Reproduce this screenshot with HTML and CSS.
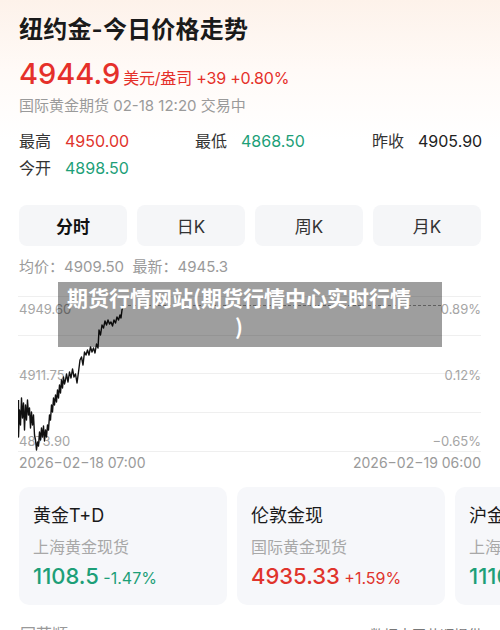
FILE: index.html
```html
<!DOCTYPE html>
<html lang="zh-CN">
<head>
<meta charset="utf-8">
<title>纽约金-今日价格走势</title>
<link rel="stylesheet" href="styles.css">
</head>
<body>
<div class="page">
  <div class="wrap">
    <h1 class="title">纽约金-今日价格走势</h1>
    <div class="price-row">
      <span class="price">4944.9</span>
      <span class="unit">美元/盎司 +39 +0.80%</span>
    </div>
    <div class="sub">国际黄金期货 02-18 12:20 交易中</div>
    <div class="stats">
      <div class="stat"><span class="lbl">最高</span><span class="val red">4950.00</span></div>
      <div class="stat"><span class="lbl">最低</span><span class="val green">4868.50</span></div>
      <div class="stat"><span class="lbl">昨收</span><span class="val">4905.90</span></div>
      <div class="stat"><span class="lbl">今开</span><span class="val green">4898.50</span></div>
    </div>
    <div class="tabs">
      <div class="tab active">分时</div>
      <div class="tab">日K</div>
      <div class="tab">周K</div>
      <div class="tab">月K</div>
    </div>
    <div class="avg">均价：4909.50&nbsp;&nbsp;最新：4945.3</div>
    <svg class="chart" width="464" height="163" viewBox="18 290 464 163">
      <g stroke="#efefef" stroke-width="1">
        <line x1="18" y1="296.5" x2="481" y2="296.5"/>
        <line x1="18" y1="335.5" x2="481" y2="335.5"/>
        <line x1="18" y1="373.5" x2="481" y2="373.5"/>
        <line x1="18" y1="412.5" x2="481" y2="412.5"/>
        <line x1="18" y1="451.5" x2="481" y2="451.5"/>
      </g>
      <line x1="123" y1="305.5" x2="441" y2="305.5" stroke="#9a9a9a" stroke-width="1" stroke-dasharray="3 2"/>
      <g class="axis">
        <text x="19" y="314">4949.60</text>
        <text x="19" y="380">4911.75</text>
        <text x="19" y="446">4873.90</text>
        <text x="481" y="314" text-anchor="end">0.89%</text>
        <text x="481" y="380" text-anchor="end">0.12%</text>
        <text x="481" y="446" text-anchor="end">−0.65%</text>
      </g>
      <polyline fill="none" stroke="#111" stroke-width="1.4" stroke-linejoin="round" points="18.5,400 18.5,437 19.5,410 20.5,425 21.5,398 22.5,418 23.5,403 24.5,430 25.5,405 26.5,420 27.5,400 28.5,415 29.5,408 30.5,428 31.5,412 32.5,425 33.5,415 34.5,435 35.5,440 36.5,450 37.5,442 38.5,446 39.5,432 40.5,440 41.5,428 42.5,437 43.5,426 44.5,441 45.5,430 46.5,437 47.5,425 48.5,430 49.5,415 50.5,420 51.5,405 52.5,412 53.5,398 54.5,405 55.5,395 56.5,402 57.5,390 58.5,398 59.5,385 60.5,393 61.5,380 62.5,388 63.5,377 64.5,384 65.5,380 66.5,374 68,382 69.5,372 71,378 72.5,369 74,377 75.5,374 77,383 78.5,372 80,360 81.5,357 83,365 84.5,352 86,355 87.5,350 89,355 90.5,347 92,352 93.5,348 95,353 96.5,344 98,348 99,330 100.5,335 102,325 103.5,328 105,321 106.5,325 108,320 109.5,324 111,322 112.5,326 114,320 115.5,323 117,317 118.5,320 120,315 121,318 122,310 123,306"/>
    </svg>
    <div class="dates"><span>2026−02−18 07:00</span><span>2026−02−19 06:00</span></div>
  </div>
  <div class="cards">
    <div class="card">
      <div class="c-name">黄金T+D</div>
      <div class="c-sub">上海黄金现货</div>
      <div class="c-val green"><span class="num">1108.5</span> <span class="pct">-1.47%</span></div>
    </div>
    <div class="card">
      <div class="c-name">伦敦金现</div>
      <div class="c-sub">国际黄金现货</div>
      <div class="c-val red"><span class="num">4935.33</span> <span class="pct">+1.59%</span></div>
    </div>
    <div class="card">
      <div class="c-name">沪金主力</div>
      <div class="c-sub">上海期货</div>
      <div class="c-val green"><span class="num">1110.2</span></div>
    </div>
  </div>
  <div class="foot">
    <span class="foot-l">同花顺</span>
    <span class="foot-r">数据由同花顺提供</span>
  </div>
  <div class="overlay">期货行情网站(期货行情中心实时行情<br>)</div>
</div>
</body>
</html>
```

FILE: styles.css
```css
* { box-sizing: border-box; margin: 0; padding: 0; }
html, body { width: 500px; height: 630px; overflow: hidden; }
body {
  font-family: Inter, "Noto Sans CJK SC", sans-serif;
  color: #222;
  background: linear-gradient(180deg, #fdf2ea 0px, #fffaf7 70px, #ffffff 140px);
}
.page { position: relative; width: 500px; height: 630px; }
.wrap { padding: 14px 19px 0 19px; }
.title {
  font-size: 24px;
  line-height: 32px;
  font-weight: 600;
  color: #1a1a1a;
  letter-spacing: 0.2px;
}
.price-row {
  margin-top: 8px;
  height: 40px;
  line-height: 40px;
  color: #e5302a;
  display: flex;
  align-items: baseline;
}
.price { font-size: 29px; font-weight: 500; }
.unit { font-size: 16px; margin-left: 3px; letter-spacing: -0.2px; }
.sub {
  margin-top: 1px;
  font-size: 15px;
  line-height: 22px;
  color: #9a9a9a;
}
.stats {
  margin-top: 11px;
  display: grid;
  grid-template-columns: 176px 177px auto;
  grid-auto-rows: 27px;
  align-items: center;
}
.stat { display: flex; gap: 14px; font-size: 16px; line-height: 27px; white-space: nowrap; }
.lbl { color: #333; }
.val { color: #222; }
.red { color: #e0342c; }
.green { color: #1d9f78; }
.tabs {
  margin-top: 23px;
  display: flex;
  gap: 10px;
}
.tab {
  flex: 1;
  height: 41px;
  border-radius: 8px;
  background: #f5f6f8;
  display: flex;
  align-items: center;
  justify-content: center;
  font-size: 17px;
  color: #333;
}
.tab.active { font-weight: 700; color: #111; }
.avg {
  margin-top: 10px;
  font-size: 15px;
  line-height: 22px;
  color: #9a9a9a;
}
.chart { display: block; margin-top: 12px; margin-left: -1px; }
.axis text { font-family: Inter, sans-serif; font-size: 13px; fill: #a5a5a5; }
.dates {
  display: flex;
  justify-content: space-between;
  font-size: 14px;
  line-height: 20px;
  color: #9a9a9a;
}
.cards {
  margin-top: 14px;
  padding-left: 19px;
  display: flex;
  gap: 10px;
  overflow: hidden;
}
.card {
  flex: 0 0 208px;
  height: 118px;
  border-radius: 10px;
  background: #f6f7fa;
  padding: 16px 14px 0 14px;
  white-space: nowrap;
  overflow: hidden;
}
.c-name { font-size: 18px; line-height: 26px; color: #1a1a1a; }
.c-sub { margin-top: 6px; font-size: 16px; line-height: 24px; color: #a8a8a8; }
.c-val { margin-top: 2px; line-height: 30px; }
.c-val .num { font-size: 22px; font-weight: 500; }
.c-val .pct { font-size: 16px; }
.foot {
  margin-top: 18px;
  padding: 0 18px 0 20px;
  display: flex;
  justify-content: space-between;
  align-items: baseline;
  color: #999;
}
.foot-l { font-size: 16px; line-height: 22px; }
.foot-r { font-size: 14px; line-height: 22px; color: #777; }
.overlay {
  position: absolute;
  left: 58px;
  top: 282px;
  width: 384px;
  height: 65px;
  background: rgba(0, 0, 0, 0.38);
  color: #fff;
  font-family: "Noto Sans CJK SC", sans-serif;
  font-weight: 700;
  font-size: 21px;
  line-height: 29px;
  text-align: center;
  padding: 1px 24px 0 2px;
  white-space: nowrap;
}
```
